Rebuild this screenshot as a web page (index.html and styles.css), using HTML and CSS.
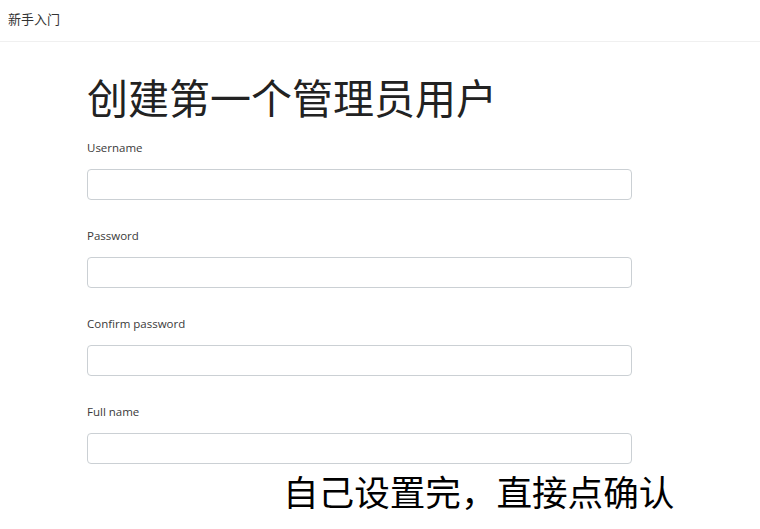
FILE: index.html
```html
<!DOCTYPE html>
<html lang="zh-CN">
<head>
    <meta charset="UTF-8">
    <meta name="viewport" content="width=device-width, initial-scale=1.0">
    <title>新手入门</title>
    <link rel="stylesheet" href="styles.css">
</head>
<body>
    <div class="topbar">新手入门</div>

    <div class="container">
        <h1>创建第一个管理员用户</h1>

        <div class="field">
            <label for="username">Username</label>
            <input type="text" id="username">
        </div>
        <div class="field">
            <label for="password">Password</label>
            <input type="password" id="password">
        </div>
        <div class="field">
            <label for="confirm">Confirm password</label>
            <input type="password" id="confirm">
        </div>
        <div class="field">
            <label for="fullname">Full name</label>
            <input type="text" id="fullname">
        </div>

        <div class="note">自己设置完，直接点确认</div>
    </div>
</body>
</html>
```

FILE: styles.css
```css
body {
    margin: 0;
    font-family: "Open Sans", "Noto Sans CJK SC", sans-serif;
    color: #333;
    background-color: white;
}
.topbar {
    height: 41px;
    line-height: 38px;
    padding-left: 8px;
    font-size: 13px;
    color: #333;
    border-bottom: 1px solid #f0f0f0;
}
.container {
    padding-left: 87px;
    width: 545px;
}
h1 {
    margin: 26px 0 16px 0;
    font-family: "Noto Sans CJK SC", sans-serif;
    font-size: 41px;
    font-weight: 400;
    line-height: 56px;
    color: #222;
}
.field {
    margin-bottom: 28px;
}
label {
    display: block;
    font-size: 11.5px;
    line-height: 16px;
    margin-bottom: 13px;
    color: #3a3a3a;
}
input[type="text"],
input[type="password"] {
    display: block;
    box-sizing: border-box;
    width: 545px;
    height: 31px;
    margin: 0;
    border: 1px solid #cbd0d4;
    border-radius: 4px;
    background: white;
}
.note {
    margin: -26px 0 0 196px;
    font-family: "Noto Sans CJK SC", sans-serif;
    font-size: 35.6px;
    line-height: 50px;
    color: #000;
    white-space: nowrap;
}
```
